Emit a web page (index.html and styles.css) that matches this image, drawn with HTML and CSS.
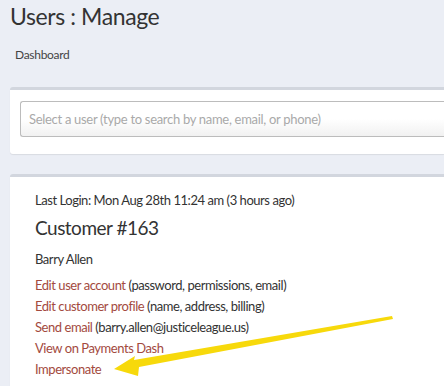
FILE: index.html
```html
<!DOCTYPE html>
<html>
<head>
<meta charset="utf-8">
<link rel="stylesheet" href="styles.css">
</head>
<body>
<div class="wrapper">
  <section class="content-header">
    <h1 class="title">Users : Manage</h1>
    <div class="crumb">Dashboard</div>
  </section>
  <section class="content">
    <div class="box">
      <div class="box-body search-body">
        <div class="select-box">Select a user (type to search by name, email, or phone)</div>
      </div>
    </div>
    <div class="box">
      <div class="box-body user-body">
        <div class="last-login">Last Login: Mon Aug 28th 11:24 am (3 hours ago)</div>
        <h3 class="customer">Customer #163</h3>
        <div class="name">Barry Allen</div>
        <ul class="actions">
          <li><a href="#">Edit user account</a> (password, permissions, email)</li>
          <li><a href="#">Edit customer profile</a> (name, address, billing)</li>
          <li><a href="#">Send email</a> (barry.allen@justiceleague.us)</li>
          <li><a href="#">View on Payments Dash</a></li>
          <li><a href="#">Impersonate</a></li>
        </ul>
      </div>
    </div>
  </section>
  <svg class="arrow" width="444" height="386" viewBox="0 0 444 386">
    <polygon points="114,369 135,356 134,360 392,316 393,319 139,367 138,376" fill="#f7d90b"/>
  </svg>
</div>
</body>
</html>
```

FILE: styles.css
```css
* { box-sizing: border-box; }
html, body {
  margin: 0;
  padding: 0;
  background: #ebeef5;
  font-family: "Lato", "Open Sans", sans-serif;
  color: #333;
  overflow: hidden;
}
.wrapper {
  position: relative;
  width: 444px;
  height: 386px;
}
.content-header {
  padding: 3px 10px 0 10px;
}
.title {
  margin: 0;
  font-size: 23px;
  line-height: 26px;
  font-weight: 400;
  letter-spacing: -0.4px;
  color: #333;
}
.crumb {
  margin-top: 19px;
  padding-left: 5px;
  font-size: 12px;
  line-height: 14px;
  letter-spacing: -0.3px;
  color: #444;
}
.content {
  padding: 25px 0 0 10px;
}
.box {
  background: #fff;
  border-top: 3px solid #d2d6de;
  border-radius: 3px 0 0 3px;
  box-shadow: 0 1px 1px rgba(0,0,0,0.08);
  margin-bottom: 20px;
}
.search-body {
  padding: 11px 0 17px 10px;
}
.select-box {
  height: 36px;
  border: 1px solid #bcbcbc;
  border-right: none;
  border-radius: 3px 0 0 3px;
  background: linear-gradient(#ffffff 50%, #f1f1f1);
  font-size: 13px;
  line-height: 34px;
  letter-spacing: -0.3px;
  padding-left: 8px;
  color: #a9a9a9;
  white-space: nowrap;
  overflow: hidden;
}
.user-body {
  padding: 14px 10px 10px 25px;
  letter-spacing: -0.45px;
}
.last-login {
  font-size: 13px;
  line-height: 18px;
}
.customer {
  margin: 7px 0 0 0;
  font-size: 19px;
  line-height: 24px;
  font-weight: 400;
  letter-spacing: -0.5px;
}
.name {
  margin-top: 10px;
  font-size: 13px;
  line-height: 18px;
}
.actions {
  list-style: none;
  margin: 7px 0 0 0;
  padding: 0;
  font-size: 13px;
  line-height: 21px;
}
.actions a {
  color: #a34a3e;
  text-decoration: none;
}
.arrow {
  position: absolute;
  left: 0;
  top: 0;
  pointer-events: none;
}
```
